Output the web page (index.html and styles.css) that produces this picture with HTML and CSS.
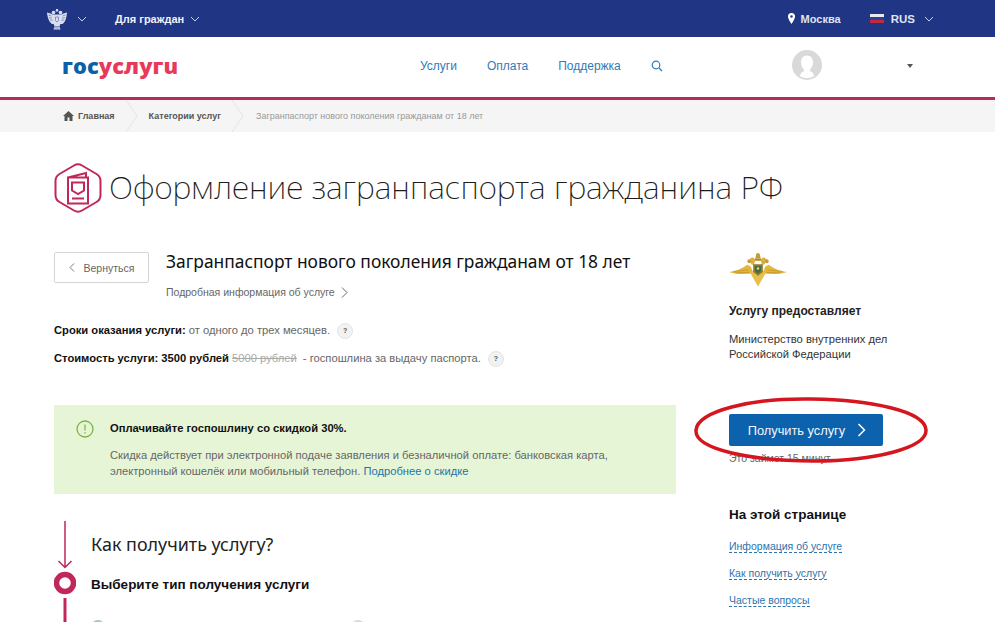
FILE: index.html
```html
<!DOCTYPE html>
<html lang="ru">
<head>
<meta charset="utf-8">
<title>Госуслуги</title>
<link rel="stylesheet" href="styles.css">
</head>
<body>
<div class="topbar">
  <div class="topbar-left">
    <svg class="emblem" width="22" height="22" viewBox="0 0 22 22">
      <g fill="#d8deee">
        <path d="M9.500 3.500h3l-.6-2.500h-1.800z"/>
        <circle cx="7.500" cy="4.500" r="1.800"/><circle cx="14.500" cy="4.500" r="1.800"/>
        <path d="M1 4.500l3.500 1L7 6.500h8l2.500-1 3.500-1c-.5 5.500-2 10-4.500 11.500H6C3.500 14.500 1.500 10 1 4.500z"/>
        <path d="M7.500 15.500h7l-1 3 1 3h-7l1-3z"/>
      </g>
      <g stroke="#5f70a8" stroke-width=".7" fill="none">
        <path d="M2.500 7l3 1M3 9.500l3 .8M4 12l2.500.3M19.500 7l-3 1M19 9.500l-3 .8M18 12l-2.500.3"/>
        <path d="M9.500 9h3v3.500l-1.500 1.500-1.500-1.500zM8 18.500h6M8.500 20h5"/>
      </g>
    </svg>
    <svg class="chev" viewBox="0 0 10 6"><path d="M1 1l4 4 4-4"/></svg>
    <span class="for-citizens">Для граждан</span>
    <svg class="chev" viewBox="0 0 10 6"><path d="M1 1l4 4 4-4"/></svg>
  </div>
  <div class="topbar-right">
    <svg class="pin" width="7" height="11" viewBox="0 0 7 11"><path fill-rule="evenodd" d="M3.500 0A3.500 3.500 0 0 1 7 3.500C7 6 3.500 11 3.500 11S0 6 0 3.500A3.500 3.500 0 0 1 3.500 0zm0 2.200a1.300 1.300 0 1 0 0 2.600 1.300 1.300 0 0 0 0-2.600z" fill="#fff"/></svg>
    <span class="city">Москва</span>
    <span class="flag"><i class="flag-w"></i><i class="flag-b"></i><i class="flag-r"></i></span>
    <span class="lang">RUS</span>
    <svg class="chev" viewBox="0 0 10 6"><path d="M1 1l4 4 4-4"/></svg>
  </div>
</div>

<header class="header">
  <div class="logo"><span class="logo-blue">гос</span><span class="logo-red">услугu</span></div>
  <nav class="nav">
    <a>Услуги</a><a>Оплата</a><a>Поддержка</a>
    <svg class="search" width="12" height="12" viewBox="0 0 12 12"><circle cx="5" cy="5" r="3.800"/><path d="M8 8l3 3"/></svg>
  </nav>
  <div class="user">
    <svg class="avatar" width="30" height="30" viewBox="0 0 30 30"><circle cx="15" cy="15" r="15" fill="#d9d9d9"/><path d="M15 5.500c-4 0-6 3-6 7 0 3 1.500 5.500 3 7 .4 1-.5 2-2.500 3L7.500 26a15 15 0 0 0 15 0l-2-3.500c-2-1-2.900-2-2.500-3 1.500-1.500 3-4 3-7 0-4-2-7-6-7z" fill="#fff"/></svg>
    <span class="caret"></span>
  </div>
</header>

<div class="crumbs">
  <svg class="home" width="11" height="10" viewBox="0 0 11 10"><path d="M5.500 0L11 5H9.500v5H6.500V6.500h-2V10h-3V5H0z" fill="#555"/></svg>
  <span class="crumb-link first">Главная</span>
  <svg class="sep" width="12" height="32" viewBox="0 0 12 32"><path d="M0 0l11 16L0 32"/></svg>
  <span class="crumb-link">Категории услуг</span>
  <svg class="sep" width="12" height="32" viewBox="0 0 12 32"><path d="M0 0l11 16L0 32"/></svg>
  <span class="crumb-current">Загранпаспорт нового поколения гражданам от 18 лет</span>
</div>

<main class="main">
  <div class="title-row">
    <svg class="title-icon" width="48" height="52" viewBox="0 0 48 52">
      <path d="M20 3.500q4-2.300 8 0l14.500 8.500q4 2.300 4 7v14q0 4.700-4 7L28 48.500q-4 2.300-8 0L5.500 40q-4-2.300-4-7V19q0-4.700 4-7z" fill="none" stroke="#c0275a" stroke-width="2"/>
      <path d="M14 15.500h20v26H14zM14 15.500l18-4.500v4" fill="none" stroke="#c0275a" stroke-width="2"/>
      <path d="M18 20.500h12v8l-6 3.500-6-3.500zM18 36.500h12" fill="none" stroke="#c0275a" stroke-width="2"/>
    </svg>
    <h1 class="title">Оформление загранпаспорта гражданина РФ</h1>
  </div>

  <div class="columns">
    <div class="left">
      <div class="service-head">
        <button class="back"><svg width="6" height="9" viewBox="0 0 6 9"><path d="M5 .5l-4 4 4 4" fill="none" stroke="#777"/></svg>Вернуться</button>
        <div class="service-info">
          <h2 class="service-name">Загранпаспорт нового поколения гражданам от 18 лет</h2>
          <a class="more">Подробная информация об услуге<svg width="7" height="11" viewBox="0 0 7 11"><path d="M1 .5l5 5-5 5" fill="none" stroke="#666"/></svg></a>
        </div>
      </div>

      <p class="fact"><b>Сроки оказания услуги:</b> от одного до трех месяцев.<span class="hint">?</span></p>
      <p class="fact second"><b>Стоимость услуги: 3500 рублей</b> <s>5000 рублей</s> - госпошлина за выдачу паспорта.<span class="hint">?</span></p>

      <div class="notice">
        <svg class="notice-icon" width="18" height="18" viewBox="0 0 18 18"><circle cx="9" cy="9" r="8" fill="none" stroke="#7cb342" stroke-width="1.300"/><path d="M9 4.500v6M9 12v1.500" stroke="#7cb342" stroke-width="1.200"/></svg>
        <div>
          <div class="notice-title">Оплачивайте госпошлину со скидкой 30%.</div>
          <div class="notice-text">Скидка действует при электронной подаче заявления и безналичной оплате: банковская карта, электронный кошелёк или мобильный телефон. <a>Подробнее о скидке</a></div>
        </div>
      </div>

      <div class="how">
        <div class="timeline">
          <svg width="22" height="102" viewBox="0 0 22 102">
            <path d="M11 0v46M4.500 40l6.500 6.500 6.500-6.500" fill="none" stroke="#c0275a" stroke-width="1.500"/>
            <circle cx="11" cy="62" r="8.500" fill="none" stroke="#c0275a" stroke-width="5.500"/>
            <path d="M11 77v25" stroke="#c0275a" stroke-width="3"/>
          </svg>
        </div>
        <div class="how-body">
          <h3 class="how-title">Как получить услугу?</h3>
          <div class="how-step">Выберите тип получения услуги</div>
          <div class="radios"><span class="radio blue"></span><span class="radio"></span></div>
        </div>
      </div>
    </div>

    <aside class="right">
      <svg class="mvd" width="58" height="36" viewBox="0 0 60 36">
        <path d="M0 20c7-.5 13-3.500 19-7.500l3.500 2 2 5 2 2c-8 .5-18 1.500-26.500-1.500zM60 20c-7-.5-13-3.500-19-7.500l-3.500 2-2 5-2 2c8 .5 18 1.500 26.500-1.500z" fill="#e2b73c"/>
        <path d="M4 19.500l16-1.500M6 21l15-.5M56 19.500l-16-1.500M54 21l-15-.5" stroke="#b58a1c" stroke-width=".6" fill="none"/>
        <path d="M22.500 22l7.500 13 7.500-13-2-3h-11z" fill="#e5bf4a"/>
        <path d="M27 6h6l1 2.500h-8z" fill="#b58a1c"/>
        <path d="M28 2.500a2 2 0 0 1 4 0l.8 3.500h-5.600z" fill="#c59c30"/>
        <path d="M22 6a3 3 0 0 1 5 2c0 2-1 3-1 5l-3-1c-.5-2-1.500-4-1-6zM38 6a3 3 0 0 0-5 2c0 2 1 3 1 5l3-1c.5-2 1.500-4 1-6z" fill="#d9b043"/>
        <circle cx="21" cy="9" r="2" fill="#c59c30"/><circle cx="39" cy="9" r="2" fill="#c59c30"/>
        <path d="M25 12h10v8l-5 4-5-4z" fill="#8d7a2a"/>
        <path d="M27 14h6v5l-3 2.500-3-2.500z" fill="#3d6b52"/>
        <circle cx="30" cy="16.500" r="1.300" fill="#e8d470"/>
      </svg>
      <div class="provider-label">Услугу предоставляет</div>
      <div class="provider">Министерство внутренних дел<br>Российской Федерации</div>
      <a class="cta">Получить услугу<svg width="9" height="14" viewBox="0 0 9 14"><path d="M1.500 1l6 6-6 6" fill="none" stroke="#fff" stroke-width="1.500"/></svg></a>
      <div class="cta-note">Это займет 15 минут</div>
      <div class="toc-title">На этой странице</div>
      <a class="toc-link">Информация об услуге</a>
      <a class="toc-link">Как получить услугу</a>
      <a class="toc-link">Частые вопросы</a>
    </aside>
  </div>
</main>

<svg class="annotation" width="236" height="68" viewBox="0 0 236 68"><path d="M118 3C58 2 5 15 3 34c-2 20 58 31 118 31 60 0 113-13 112-31C232 15 178 4 118 3z" fill="none" stroke="#d5161f" stroke-width="3.500"/></svg>
</body>
</html>
```
FILE: styles.css
```css
* { box-sizing: border-box; }
html, body { margin: 0; padding: 0; height: 622px; overflow: hidden; }
body { font-family: "Liberation Sans", Arial, sans-serif; background: #fff; color: #111; position: relative; }
a { text-decoration: none; }

.topbar { height: 37px; background: #203583; display: flex; justify-content: space-between; align-items: center; color: #fff; font-size: 11px; font-weight: 700; padding: 0 61px 0 46px; }
.topbar-left, .topbar-right { display: flex; align-items: center; }
.emblem { margin-right: 9px; }
.chev { width: 10px; height: 6px; fill: none; stroke: #c9d1e6; stroke-width: 1; }
.for-citizens { margin: 0 6px 0 28px; color: #f0f2f8; }
.pin { margin-right: 6px; }
.city { color: #dfe4f2; }
.flag { display: flex; flex-direction: column; margin: 0 7px 0 29px; width: 14px; }
.flag i { height: 3px; display: block; }
.flag-w { background: #e8e8ef; }
.flag-b { background: #2d3f8e; }
.flag-r { background: #c02a3c; }
.lang { font-size: 11.500px; color: #dfe4f2; margin-right: 9px; }

.header { height: 60px; display: flex; align-items: center; position: relative; padding-left: 62px; }
.logo { font-family: "Open Sans", sans-serif; font-weight: 800; font-size: 21.800px; letter-spacing: .1px; width: 358px; line-height: 1; margin-top: -2px; }
.logo-blue { color: #0d5fa8; }
.logo-red { color: #e8395a; }
.nav { display: flex; align-items: center; gap: 30px; font-size: 12px; width: 372px; margin-top: -2px; }
.nav a { color: #2f7bb8; }
.search { fill: none; stroke: #2f7bb8; stroke-width: 1.200; margin-left: 0; }
.user { display: flex; align-items: center; }
.avatar { margin-top: -4px; }
.caret { width: 0; height: 0; border-left: 3px solid transparent; border-right: 3px solid transparent; border-top: 4px solid #555; margin-left: 85px; margin-top: -3px; }

.crumbs { height: 35px; border-top: 3px solid #b92a58; background: #f5f5f5; display: flex; align-items: center; padding-left: 63px; font-size: 9px; font-weight: 700; color: #555; }
.home { margin-right: 4px; }
.crumb-link.first { margin-right: 11px; }
.sep { fill: none; stroke: #e4e4e4; flex: none; }
.crumb-link { margin-right: 0; margin-left: 0; }
.sep + .crumb-link { margin: 0 11px 0 11px; }
.crumb-current { font-weight: 400; color: #999; margin-left: 12px; }

.main { padding: 30px 0 0 54px; }
.title-row { display: flex; align-items: center; gap: 7px; height: 52px; }
.title { margin: -3px 0 0; font-family: "Noto Sans", sans-serif; font-weight: 200; font-size: 32px; color: #1c1c1c; white-space: nowrap; }

.columns { display: flex; margin-top: 38px; }
.left { width: 622px; flex: none; }
.right { margin-left: 53px; width: 200px; flex: none; display: flex; flex-direction: column; align-items: flex-start; }

.service-head { display: flex; gap: 17px; }
.back { width: 95px; height: 31px; border: 1px solid #d5d5d5; border-radius: 2px; background: #fff; color: #666; font: 10.500px "Liberation Sans", Arial, sans-serif; display: flex; align-items: center; justify-content: center; gap: 9px; padding: 0; }
.service-name { margin: -1px 0 0; font-family: "Noto Sans", sans-serif; font-weight: 400; font-size: 17.400px; line-height: 20px; color: #111; white-space: nowrap; }
.more { display: flex; align-items: center; gap: 6px; font-size: 10.500px; color: #666; margin-top: 15px; line-height: 12px; }

.fact { margin: 25px 0 0; font-size: 11.200px; color: #666; line-height: 14px; white-space: nowrap; }
.fact b { color: #111; }
.fact.second { margin-top: 12px; }
.fact s { color: #aaa; margin-right: 3px; }
.hint { display: inline-block; width: 16px; height: 16px; line-height: 14px; border-radius: 50%; background: #f2f2f2; border: 1px solid #e4e4e4; margin-left: 7px; text-align: center; font-size: 7px; font-weight: 700; color: #555; vertical-align: 1px; }

.notice { margin-top: 38px; height: 89px; background: #e6f5d6; display: flex; gap: 16px; padding: 15px 0 0 22px; }
.notice-title { font-size: 11.200px; font-weight: 700; color: #111; line-height: 16px; }
.notice-text { margin-top: 11px; font-size: 11.200px; line-height: 16px; color: #666; width: 530px; }
.notice-text a { color: #1f73a8; }

.how { display: flex; gap: 15px; margin-top: 27px; }
.timeline { height: 102px; }
.how-title { margin: 0; padding-top: 13px; font-family: "Noto Sans", sans-serif; font-weight: 400; font-size: 17.900px; line-height: 20px; color: #222; }
.how-step { margin-top: 24px; font-size: 13.500px; font-weight: 700; line-height: 14px; }
.radios { display: flex; gap: 246px; margin-top: 28px; margin-left: 0; }
.radio { width: 14px; height: 14px; border-radius: 50%; background: #d6d9dc; display: block; }
.radio.blue { background: #a9c0cf; }

.mvd { margin-top: 0; margin-bottom: 0; }
.provider-label { margin-top: 15px; font-size: 12px; font-weight: 700; color: #222; line-height: 16px; }
.provider { margin-top: 13px; font-size: 11.200px; line-height: 15px; color: #333; }
.cta { margin-top: 52px; width: 154px; height: 32px; background: #0d62ad; border-radius: 2px; color: #f2f7fb; font-size: 12.800px; display: flex; align-items: center; justify-content: center; gap: 12px; padding-left: 2px; }
.cta-note { margin-top: 5px; font-size: 10.500px; line-height: 14px; color: #666; }
.toc-title { margin-top: 41px; font-size: 13.500px; font-weight: 700; line-height: 18px; color: #111; }
.toc-link { display: block; margin-top: 14px; font-size: 10.500px; line-height: 12px; color: #2d74ae; border-bottom: 1px dashed #2d74ae; }
.toc-title + .toc-link { margin-top: 16px; }

.annotation { position: absolute; left: 693px; top: 396px; }
```
